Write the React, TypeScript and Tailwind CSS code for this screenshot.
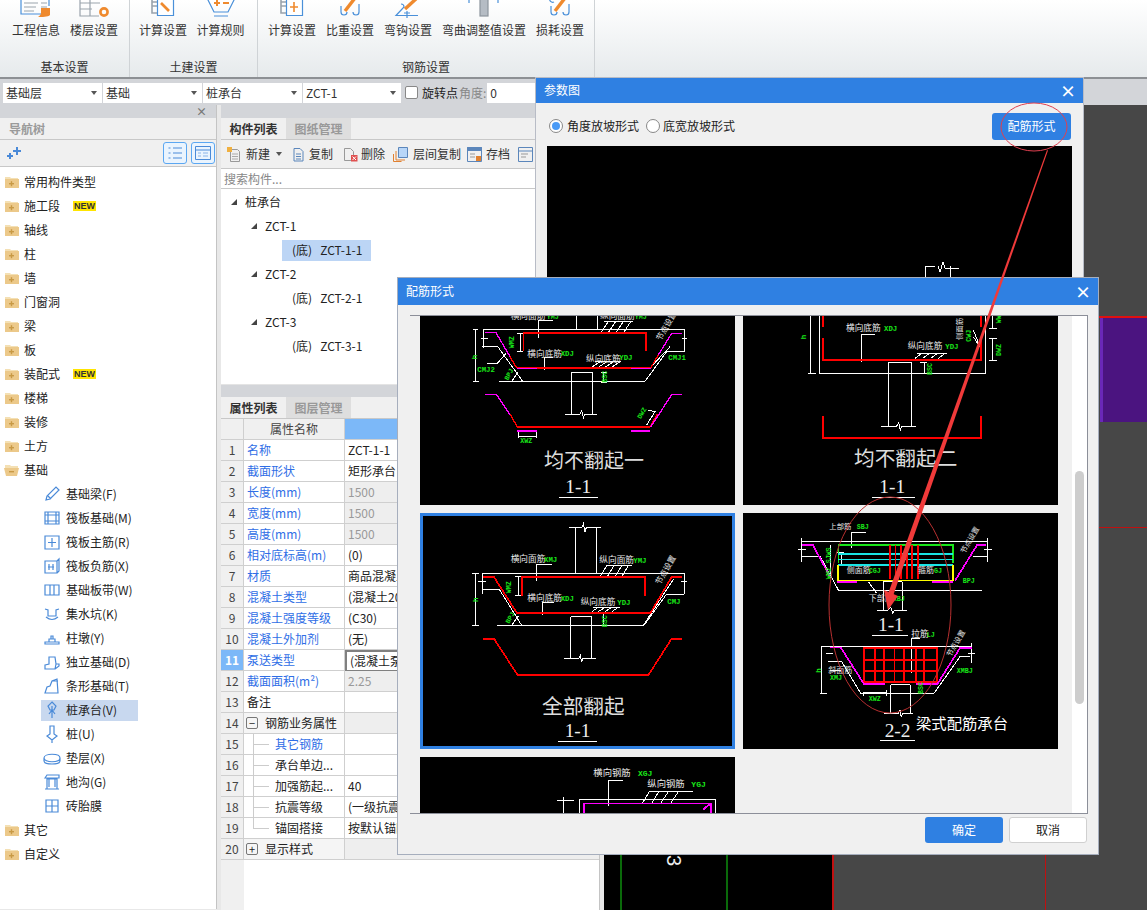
import type { ReactNode } from "react";

const BLUE = "#4a8ad8";

function P({ d, c = "#fff", w = 3 }: { d: string; c?: string; w?: number }) {
  return <path d={d} fill="none" stroke={c} strokeWidth={w} shapeRendering="crispEdges" />;
}

// labels inside the CAD pictures, sizes are in zoomed units (3 = 1px)
function T({ x, y, s = 26, c = "#e8e8e8", r, mono, serif, children }: { x: number; y: number; s?: number; c?: string; r?: number; mono?: boolean; serif?: boolean; children: ReactNode }) {
  const family = mono ? "'Liberation Mono', monospace" : serif ? "'Liberation Serif', serif" : "'Noto Sans CJK SC', sans-serif";
  return (
    <text x={x} y={y} fontSize={s} fill={c} fontFamily={family} fontWeight={mono ? 700 : 400} transform={r ? `rotate(${r} ${x} ${y})` : undefined}>
      {children}
    </text>
  );
}

const G = "#19e619";

function TileOne() {
  return (
    <svg viewBox="30 18 945 567" className="block h-full w-full bg-black">
      <P d="M220 58H825M498 18V58M562 18V58M195 58V215M188 58H205M188 215H208M220 58V115M212 85H235M215 108H262L338 214M268 214H705L770 125H822M822 58V125M815 85H832M330 70V125M320 70H340M320 125H340M385 30H430M385 30V85M403 142H430M403 142V180M230 160H262L288 130M305 214L325 185M485 187H548M485 187V313M548 187V313M465 313H510L515 303L520 323L524 313H560M572 187H590M572 217H590M580 187V217M570 72L595 35M592 72L617 35M615 72L640 35M638 72L662 35M582 35H668M545 172L570 155M565 172L590 155M585 172L610 155M605 172L630 155M555 155H632M720 174L780 110" />
      <P d="M340 122V68H708V122" c="#f00" w={5} />
      <P d="M322 174H722" c="#f00" w={5} />
      <P d="M225 68H258L300 140" c="#f0f" w={4} />
      <P d="M300 140L320 174" c="#f00" w={4} />
      <P d="M722 174L745 135" c="#f00" w={4} />
      <P d="M745 135L785 70H815" c="#f0f" w={4} />
      <P d="M322 175H380M664 175H722" c="#f0f" w={5} />
      <T x={302} y={26}>横向面筋</T>
      <T x={410} y={26} s={20} c={G} mono>YMJ</T>
      <T x={570} y={28}>纵向面筋</T>
      <T x={674} y={28} s={20} c={G} mono>YMJ</T>
      <T x={352} y={140}>横向底筋</T>
      <T x={452} y={138} s={22} c={G} mono>XDJ</T>
      <T x={528} y={156}>纵向底筋</T>
      <T x={628} y={150} s={22} c={G} mono>YDJ</T>
      <T x={202} y={186} s={22} c={G} mono>CMJ2</T>
      <T x={775} y={150} s={22} c={G} mono>CMJ1</T>
      <T x={312} y={115} s={20} c={G} r={-90} mono>WMZ</T>
      <T x={200} y={148} s={22} c={G} r={-90} mono>h</T>
      <T x={294} y={212} s={20} c={G} r={-62} mono>BPJ</T>
      <T x={592} y={218} s={20} c={G} r={-90} mono>BSC</T>
      <T x={752} y={94} s={24} r={-60}>节点设置</T>
      <P d="M225 254H260L300 315" c="#f0f" w={4} />
      <P d="M300 312L322 351H720L742 312" c="#f00" w={4} />
      <P d="M722 351L785 254H815" c="#f0f" w={4} />
      <P d="M322 362H380M664 362H720" c="#f0f" w={5} />
      <P d="M325 365V385M380 365V385M325 378H380M710 345L735 305L715 300" />
      <T x={331} y={400} s={20} c={G} mono>XWZ</T>
      <T x={692} y={328} s={20} c={G} r={-60} mono>DWZ</T>
      <T x={402} y={474} s={60} c="#ddd">均不翻起一</T>
      <T x={466} y={548} s={58} c="#eee" serif>1-1</T>
      <P d="M447 562H563" />
    </svg>
  );
}

function TileTwo() {
  return (
    <svg viewBox="9 18 945 567" className="block h-full w-full bg-black">
      <P d="M212 18V190M205 190H228M238 18V190H737V18M445 158H515M445 158V348M515 158V348M424 348H470L476 338L481 360L485 348H527M552 158V190M540 158H562M365 72H405M365 72V155M525 145L545 130M548 145L568 130M572 145L592 130M595 145L615 130M530 130H622M747 85H770M747 152H770M758 85V152M747 56H770M758 18V56M700 60L722 115M700 80L722 115" />
      <P d="M248 18V50M248 85V150H723V85M723 18V50" c="#f00" w={5} />
      <P d="M248 318V383H723V318" c="#f00" w={5} />
      <T x={318} y={62}>横向底筋</T>
      <T x={432} y={62} s={22} c={G} mono>XDJ</T>
      <T x={503} y={118}>纵向底筋</T>
      <T x={616} y={118} s={22} c={G} mono>YDJ</T>
      <T x={198} y={88} s={22} c={G} r={-90} mono>h</T>
      <T x={575} y={195} s={20} c={G} r={-90} mono>BSC</T>
      <T x={692} y={95} s={20} c={G} r={-90} mono>CWJ</T>
      <T x={784} y={138} s={20} c={G} r={-90} mono>DWZ</T>
      <T x={784} y={40} s={20} c={G} r={-90} mono>WW</T>
      <T x={666} y={90} s={22} r={-90}>侧面筋</T>
      <T x={342} y={468} s={62} c="#ddd">均不翻起二</T>
      <T x={418} y={548} s={58} c="#eee" serif>1-1</T>
      <P d="M396 562H524" />
    </svg>
  );
}

function TileThree() {
  return (
    <svg viewBox="39 18 927 690" className="block h-full w-full bg-black">
      <P d="M217 190H822M497 52V190M558 52V190M478 52H516L520 42L525 66L529 52H572M197 190V347M187 190H207M187 347H207M217 190V252M205 215H228M217 238H268L335 346M262 346H702L770 252H822M822 190V252M812 215H830M326 200V257M316 200H336M316 257H336M380 162H425M380 162V212M398 277H432M398 277V315M567 205L590 167M589 205L612 167M612 205L635 167M632 205L655 167M588 167H665M545 305L565 292M565 305L585 292M585 305L605 292M605 305L625 292M550 292H630M305 346L325 318M482 320H545M482 320V445M545 320V445M462 445H506L511 435L515 457L519 445H557M568 310H590M568 347H590M580 310V347M700 346L790 208" />
      <P d="M336 257V201H705V257" c="#f00" w={5} />
      <P d="M219 201H252L320 308H722L785 201H815" c="#f00" w={5} />
      <P d="M220 386H252L322 494H716L785 386H815" c="#f00" w={5} />
      <T x={302} y={156}>横向面筋</T>
      <T x={402} y={156} s={22} c={G} mono>XMJ</T>
      <T x={568} y={160}>纵向面筋</T>
      <T x={670} y={158} s={22} c={G} mono>YMJ</T>
      <T x={352} y={272}>横向底筋</T>
      <T x={452} y={272} s={22} c={G} mono>XDJ</T>
      <T x={512} y={284}>纵向底筋</T>
      <T x={622} y={284} s={22} c={G} mono>YDJ</T>
      <T x={772} y={282} s={22} c={G} mono>CMJ</T>
      <T x={304} y={250} s={20} c={G} r={-90} mono>WMZ</T>
      <T x={203} y={276} s={22} c={G} r={-90} mono>h</T>
      <T x={297} y={342} s={20} c={G} r={-60} mono>BPJ</T>
      <T x={590} y={352} s={20} c={G} r={-90} mono>BSC</T>
      <T x={750} y={226} s={24} r={-60}>节点设置</T>
      <T x={396} y={612} s={62} c="#ddd">全部翻起</T>
      <T x={464} y={682} s={58} c="#eee" serif>1-1</T>
      <P d="M445 694H560" />
    </svg>
  );
}

function TileFour() {
  return (
    <svg viewBox="9 9 945 708" className="block h-full w-full bg-black">
      <P d="M185 94H742M185 85V155M175 118H198M185 138H240L295 240H725M742 85V155M732 118H755M700 138H742M335 66H378M335 66V115M430 215H487M430 215V302M487 215V302M412 302H442L452 292L458 310L462 302H500M385 215L410 250M270 105V205M290 128H312M290 165H312M305 128V165M245 408H695M245 408V550M240 550H262M258 430H280M265 455H305L362 550H582L660 440H690M695 398V460M685 430H705M514 385V490M514 385H540M370 545V558M370 548H438M438 540V558M452 524H510M452 524V612M510 524V612M432 610H475L480 600L484 622L488 610H520M270 482H305" />
      <P d="M295 105H638V160" c="#19e619" w={5} />
      <P d="M295 105V160" c="#19e619" w={5} />
      <P d="M295 132H638M295 148H638M295 165H638" c="#19e6e6" w={5} />
      <P d="M293 165V211H638V165" c="#ff0" w={5} />
      <P d="M450 105V208M466 105V208M482 105V208M500 105V208M516 105V208M534 105V208" c="#f00" w={5} />
      <P d="M186 104H218L270 200M712 104H738M712 104L645 212M290 215H350M575 215H640" c="#f0f" w={5} />
      <P d="M372 414H590V516H372ZM372 450H590M372 483H590M405 414V516M432 414V516M463 414V516M492 414V516M528 414V516M552 414V516" c="#f00" w={5} />
      <P d="M270 412H302L372 522H435M528 522H592L660 414H695" c="#f0f" w={5} />
      <T x={268} y={58} s={22}>上部筋</T>
      <T x={350} y={58} s={20} c={G} mono>SBJ</T>
      <T x={320} y={188} s={24}>侧面筋</T>
      <T x={386} y={188} s={20} c={G} mono>CGJ</T>
      <T x={534} y={190} s={24}>箍筋</T>
      <T x={582} y={190} s={20} c={G} mono>GJ</T>
      <T x={386} y={272} s={24}>下部筋</T>
      <T x={458} y={272} s={20} c={G} mono>XBJ</T>
      <T x={668} y={220} s={20} c={G} mono>BPJ</T>
      <T x={272} y={208} s={20} c={G} r={-90} mono>WMZ SJWS</T>
      <T x={674} y={132} s={22} r={-60}>节点设置</T>
      <T x={414} y={362} s={58} c="#eee" serif>1-1</T>
      <P d="M396 376H504" />
      <T x={514} y={382} s={26}>拉筋</T>
      <T x={560} y={382} s={20} c={G} mono>LJ</T>
      <T x={265} y={488} s={24}>斜面筋</T>
      <T x={270} y={510} s={20} c={G} mono>XMJ</T>
      <T x={650} y={488} s={20} c={G} mono>XMBJ</T>
      <T x={386} y={572} s={20} c={G} mono>XWZ</T>
      <T x={548} y={552} s={20} c={G} r={-90} mono>BSC</T>
      <T x={244} y={488} s={22} c={G} r={-90} mono>h</T>
      <T x={632} y={442} s={22} r={-60}>节点设置</T>
      <T x={434} y={680} s={58} c="#eee" serif>2-2</T>
      <P d="M420 692H526" />
      <T x={528} y={656} s={46} c="#fff">梁式配筋承台</T>
    </svg>
  );
}

function TileFive() {
  return (
    <svg viewBox="30 741 945 171" className="block h-full w-full bg-black">
      <P d="M440 870H492M460 860V912M510 868H916V912M508 868V912M595 812H638M595 812V888M697 880L718 845M725 880L746 845M752 880L775 845M782 880L805 845M718 845H848" />
      <P d="M522 912V880H902V912" c="#f0f" w={5} />
      <P d="M880 898L900 882" c="#f0f" w={6} />
      <T x={550} y={798} s={28}>横向钢筋</T>
      <T x={684} y={798} s={24} c={G} mono>XGJ</T>
      <T x={712} y={830} s={28}>纵向钢筋</T>
      <T x={844} y={830} s={24} c={G} mono>YGJ</T>
    </svg>
  );
}

function Folder({ open }: { open?: boolean }) {
  return (
    <svg width="15" height="14" viewBox="0 0 15 14" className="shrink-0">
      <path d="M1 2h5l1 1h7v3H1z" fill="#f4e0b4" />
      {open ? <path d="M0 5h15l-2 8H2z" fill="#ecc98a" /> : <rect x="1" y="4" width="14" height="9" fill="#ecc98a" />}
      <rect x="5" y="8" width="5" height="1.4" fill="#c99a45" />
      {!open && <rect x="6.8" y="6.2" width="1.4" height="5" fill="#c99a45" />}
    </svg>
  );
}

const navFolders = ["常用构件类型", "施工段", "轴线", "柱", "墙", "门窗洞", "梁", "板", "装配式", "楼梯", "装修", "土方"];

function ChildIcon({ n }: { n: number }) {
  const shapes: ReactNode[] = [
    <path d="M3 15l1-4L13 2l3 3-9 9z M5 11l3 3" />,
    <path d="M2 3h14v12H2z M5 3v12M13 3v12M2 6h14M2 12h14" />,
    <path d="M2 3h14v13H2z M9 5v9M5 9.5h8" />,
    <path d="M2 4h12v12H2z M14 4l2-2v12l-2 2 M6 7v6M10 7v6M5 10h6" />,
    <path d="M2 4h14v10H2z M7 4v10M11 4v10" />,
    <path d="M2 4l3 1v6h8V5l3-1M3 12q6 5 12 0" />,
    <path d="M2 13h14v2H2z M6 13v-3h6v3M8 10V7h2v3" />,
    <path d="M2 12l4-1V4h6l1 7-1 5H2z M12 16l4-3v-2l-3 0" />,
    <path d="M2 16l2-6 3-1 2-5 5-2 1 14z M9 4l6 0" />,
    <path d="M9 1l4 4-2 4h-4l-2-4z M9 5v12M6 13l3-4 3 4" />,
    <path d="M7 1h4v8l3 2-5 4-5-4 3-2z M9 15v3" />,
    <path d="M1 9c0-5 16-5 16 0s-16 5-16 0z M1 9v3c0 4 16 4 16 0V9" />,
    <path d="M2 16h14M4 16V6h10v10M2 5l2-3h12v3z M6 6v8M12 6v8" />,
    <path d="M3 3h12v12H3z M9 3v12M3 9h12" />,
  ];
  return (
    <svg width="18" height="18" viewBox="0 0 18 18" fill="none" stroke={BLUE} strokeWidth="1.2" className="shrink-0">
      {shapes[n]}
    </svg>
  );
}

const navChildren = ["基础梁(F)", "筏板基础(M)", "筏板主筋(R)", "筏板负筋(X)", "基础板带(W)", "集水坑(K)", "柱墩(Y)", "独立基础(D)", "条形基础(T)", "桩承台(V)", "桩(U)", "垫层(X)", "地沟(G)", "砖胎膜"];

function New() {
  return <span className="ml-2 bg-[#ffe500] px-px font-['Liberation_Sans',sans-serif] text-[9px] leading-[10px] font-bold text-[#333]">NEW</span>;
}

function NavTree() {
  return (
    <div className="flex h-[804px] w-[217px] shrink-0 flex-col border-r border-[#c4c4c4] bg-white">
      <div className="flex h-[13px] items-center justify-end bg-[#d3d5d9] pr-[9px] text-[11px] leading-none font-bold text-[#777]">×</div>
      <div className="flex h-[22px] items-center border-b border-[#c8c8c8] bg-[#f0f0f0] pl-[9px] text-[12px] font-bold text-[#9a9a9a]">导航树</div>
      <div className="flex h-[27px] items-center gap-1 border-b border-[#c8c8c8] bg-[#f0f0f0] pr-[1px]">
        <svg width="16" height="14" viewBox="0 0 16 14" fill={BLUE} className="ml-[6px] mr-auto">
          <path d="M10 1h2v3h3v2h-3v3h-2V6H7V4h3zM3 7h2v2h2v2H5v2H3v-2H1V9h2z" />
        </svg>
        <div className="flex h-[22px] w-[24px] items-center justify-center rounded-[3px] border border-[#5ba7f2] bg-[#eaf4fe]">
          <svg width="16" height="14" fill="none" stroke={BLUE}>
            <path d="M1.5 2h2M1.5 7h2M1.5 12h2M6 2h9M6 7h9M6 12h9" />
          </svg>
        </div>
        <div className="flex h-[22px] w-[24px] items-center justify-center rounded-[3px] border border-[#5ba7f2] bg-[#eaf4fe]">
          <svg width="16" height="14" fill="none" stroke={BLUE}>
            <path d="M.5.5h15v13H.5zM.5 4h15" />
            <path d="M3 7h3M8 7h5M3 10h3M8 10h5" stroke="#8ab4e8" />
          </svg>
        </div>
      </div>
      <div className="flex flex-col pt-[3px] text-[12px] text-[#222]">
        {navFolders.map((name) => (
          <div key={name} className="flex h-[24px] items-center gap-[5px] pl-[4px]">
            <Folder />
            <span>{name}</span>
            {(name === "施工段" || name === "装配式") && <New />}
          </div>
        ))}
        <div className="flex h-[24px] items-center gap-[5px] pl-[4px]">
          <Folder open />
          <span>基础</span>
        </div>
        {navChildren.map((name, i) => (
          <div key={name} className="flex h-[24px] items-center pl-[41px]">
            <div className={`flex h-[21px] w-[97px] items-center gap-[5px] whitespace-nowrap pl-[2px] ${name === "桩承台(V)" ? "bg-[#c8d8ef]" : ""}`}>
              <ChildIcon n={i} />
              <span>{name}</span>
            </div>
          </div>
        ))}
        <div className="flex h-[24px] items-center gap-[5px] pl-[4px]">
          <Folder />
          <span>其它</span>
        </div>
        <div className="flex h-[24px] items-center gap-[5px] pl-[4px]">
          <Folder />
          <span>自定义</span>
        </div>
      </div>
    </div>
  );
}

function Tabs({ a, b }: { a: string; b: string }) {
  return (
    <div className="flex h-[22px] border-b border-[#c8c8c8] bg-[#f0f0f0] text-[12px] font-bold">
      <div className="flex w-[65px] items-center justify-center text-[#333]">{a}</div>
      <div className="flex w-[65px] items-center justify-center bg-[#dedede] text-[#999]">{b}</div>
    </div>
  );
}

const Tri = () => (
  <svg width="6" height="6" viewBox="0 0 6 6" fill="#444" className="shrink-0">
    <path d="M6 0V6H0z" />
  </svg>
);

const compTree: [number, string, boolean?][] = [
  [0, "桩承台", true],
  [1, "ZCT-1", true],
  [2, "(底)   ZCT-1-1"],
  [1, "ZCT-2", true],
  [2, "(底)   ZCT-2-1"],
  [1, "ZCT-3", true],
  [2, "(底)   ZCT-3-1"],
];

function ToolIcon({ kind }: { kind: number }) {
  return (
    <svg width="15" height="15" viewBox="0 0 15 15" fill="none" stroke="#5b86bb" className="shrink-0">
      {kind === 0 && (
        <>
          <path d="M3.5 2.5h7l2 2v10h-9z" stroke="#999" />
          <path d="M5 7h6M5 9.5h6M5 12h6" stroke="#aaa" />
          <path d="M0 0h5v5H0z" fill="#f0b040" stroke="none" />
        </>
      )}
      {kind === 1 && <path d="M3 1.5h6l3 3v9.5H3zM5 7h5M5 9.5h5M5 12h5" />}
      {kind === 2 && (
        <>
          <path d="M1.5 1.5h6l3 3v9h-9z" stroke="#999" />
          <path d="M8 8h6.5v6.5H8z" fill="#e05050" stroke="none" />
          <path d="M9.5 9.5l3.5 3.5M13 9.5l-3.5 3.5" stroke="#fff" />
        </>
      )}
      {kind === 3 && (
        <>
          <path d="M5.5 .5h9v10h-9z" fill="#b8d6f8" />
          <path d="M3 4v9h9M.5 7v7.5h8" stroke="#e08030" />
        </>
      )}
      {kind === 4 && (
        <>
          <path d="M.5 .5h14v14H.5z" />
          <path d="M.5 .5h14v3H.5z" fill="#5b86bb" />
          <path d="M3 7h5M3 10h5" stroke="#999" />
          <path d="M9 9h5v5H9z" fill="#e08030" stroke="none" />
        </>
      )}
      {kind === 5 && (
        <>
          <path d="M.5 .5h14v14H.5zM.5 4h14" />
          <path d="M3 7h7M3 10h5" stroke="#999" />
        </>
      )}
    </svg>
  );
}

function ComponentList() {
  return (
    <div className="flex h-[279px] flex-col bg-white">
      <div className="h-[13px] bg-[#d3d5d9]" />
      <Tabs a="构件列表" b="图纸管理" />
      <div className="flex h-[29px] items-center whitespace-nowrap border-b border-[#c8c8c8] bg-[#f0f0f0] pl-[6px] text-[12px] text-[#333]">
        <ToolIcon kind={0} />
        <span className="ml-[4px]">新建</span>
        <span className="ml-[6px] h-0 w-0 border-x-[3px] border-t-[4px] border-x-transparent border-t-[#555]" />
        <span className="ml-[9px]"><ToolIcon kind={1} /></span>
        <span className="ml-[3px]">复制</span>
        <span className="ml-[10px]"><ToolIcon kind={2} /></span>
        <span className="ml-[3px]">删除</span>
        <span className="ml-[8px]"><ToolIcon kind={3} /></span>
        <span className="ml-[5px]">层间复制</span>
        <span className="ml-[6px]"><ToolIcon kind={4} /></span>
        <span className="ml-[4px]">存档</span>
        <span className="ml-[8px]"><ToolIcon kind={5} /></span>
      </div>
      <div className="flex h-[20px] items-center border-b border-[#c8c8c8] pl-[3px] text-[12px] text-[#888]">搜索构件...</div>
      <div className="flex flex-col pt-[1px] text-[12px] text-[#222]">
        {compTree.map(([depth, label, arrow]) => (
          <div key={label} className="flex h-[24px] items-center">
            {arrow ? (
              <div className={`flex items-center gap-[8px] ${depth === 0 ? "pl-[10px]" : "pl-[30px]"}`}>
                <Tri />
                <span>{label}</span>
              </div>
            ) : (
              <div className={`ml-[61px] flex h-[21px] w-[89px] items-center whitespace-pre pl-[10px] ${label === "(底)   ZCT-1-1" ? "bg-[#bcd5f5]" : ""}`}>{label}</div>
            )}
          </div>
        ))}
      </div>
    </div>
  );
}

type Row = { name: string; value?: string; blue?: boolean; gray?: boolean; indent?: boolean; box?: string; active?: boolean; last?: boolean };

const rows: Row[] = [
  { name: "名称", value: "ZCT-1-1", blue: true },
  { name: "截面形状", value: "矩形承台", blue: true },
  { name: "长度(mm)", value: "1500", blue: true, gray: true },
  { name: "宽度(mm)", value: "1500", blue: true, gray: true },
  { name: "高度(mm)", value: "1500", blue: true, gray: true },
  { name: "相对底标高(m)", value: "(0)", blue: true },
  { name: "材质", value: "商品混凝土", blue: true },
  { name: "混凝土类型", value: "(混凝土20石)", blue: true },
  { name: "混凝土强度等级", value: "(C30)", blue: true },
  { name: "混凝土外加剂", value: "(无)", blue: true },
  { name: "泵送类型", value: "(混凝土泵)", blue: true, active: true },
  { name: "截面面积(m²)", value: "2.25", blue: true, gray: true },
  { name: "备注" },
  { name: "钢筋业务属性", box: "−" },
  { name: "其它钢筋", blue: true, indent: true },
  { name: "承台单边...", indent: true },
  { name: "加强筋起...", value: "40", indent: true },
  { name: "抗震等级", value: "(一级抗震)", indent: true },
  { name: "锚固搭接", value: "按默认锚固搭接", indent: true, last: true },
  { name: "显示样式", box: "+" },
];

function PropertyTable() {
  return (
    <div className="flex min-h-0 flex-1 flex-col bg-white">
      <div className="h-[12px] bg-[#d3d5d9]" />
      <Tabs a="属性列表" b="图层管理" />
      <div className="flex flex-col text-[12px]">
        <div className="flex h-[21px]">
          <div className="w-[23px] border-r border-b border-[#cfcfcf] bg-[#f0f0f0]" />
          <div className="flex w-[101px] items-center justify-center border-r border-b border-[#cfcfcf] bg-[#f0f0f0] text-[#444]">属性名称</div>
          <div className="flex-1 border-b border-[#cfcfcf] bg-[#7cb8f8]" />
        </div>
        {rows.map((r, i) => {
          const band = Boolean(r.box);
          return (
            <div key={r.name} className="flex h-[21px]">
              <div className={`flex w-[23px] items-center justify-center border-r border-b border-[#cfcfcf] ${r.active ? "bg-[#7cb8f8] font-bold text-white" : "bg-[#f0f0f0] text-[#444]"}`}>{i + 1}</div>
              <div className={`relative flex w-[101px] items-center whitespace-nowrap border-r border-b border-[#cfcfcf] ${band ? "bg-[#f5f5f5]" : ""} ${r.blue ? "text-[#2f6ee6]" : "text-[#222]"} ${r.indent ? "pl-[31px]" : r.box ? "pl-[2px]" : "pl-[3px]"}`}>
                {r.indent && (
                  <>
                    <span className={`absolute left-[9px] top-0 w-px bg-[#ccc] ${r.last ? "h-[11px]" : "h-[21px]"}`} />
                    <span className="absolute left-[9px] top-[10px] h-px w-[16px] bg-[#ccc]" />
                  </>
                )}
                {r.box && <span className="mr-[7px] flex h-[12px] w-[12px] items-center justify-center rounded-[2px] border border-[#777] text-[11px] leading-none">{r.box}</span>}
                {r.name}
              </div>
              <div className={`flex flex-1 items-center whitespace-nowrap border-b pl-[3px] ${r.gray ? "bg-[#eeeeee] text-[#999]" : "text-[#222]"} ${band ? "bg-[#eeeeee]" : ""} ${r.active ? "border-2 border-[#808080] pl-[2px]" : "border-[#cfcfcf]"}`}>{r.value}</div>
            </div>
          );
        })}
      </div>
      <div className="flex-1 border-l-[23px] border-[#f0f0f0]" />
    </div>
  );
}

function CanvasArea() {
  return (
    <svg className="block h-full w-full" viewBox="604 105 543 805" preserveAspectRatio="none">
      <rect x="604" y="105" width="543" height="805" fill="#474747" />
      <rect x="604" y="316" width="543" height="2" fill="#e01010" />
      <rect x="1100" y="318" width="47" height="104" fill="#4b1480" />
      <rect x="1100" y="318" width="3" height="104" fill="#6a28b8" />
      <rect x="1099" y="527" width="48" height="1" fill="#c01010" />
      <rect x="604" y="840" width="229" height="70" fill="#000" />
      <rect x="620" y="840" width="2" height="70" fill="#0a6a0a" />
      <rect x="726" y="840" width="2" height="70" fill="#0a6a0a" />
      <rect x="832" y="840" width="2" height="70" fill="#c01010" />
      <rect x="1045" y="840" width="1" height="70" fill="#c01010" />
      <text x="667" y="844" fontSize="20" fill="#eee" fontFamily="'Liberation Sans', sans-serif" transform="rotate(90 667 844)">03</text>
    </svg>
  );
}

const ribbon = [
  { w: 130, pl: 7, title: "基本设置", items: [["工程信息", 58, 0], ["楼层设置", 58, 1]] },
  { w: 128, pl: 4, title: "土建设置", items: [["计算设置", 58, 2], ["计算规则", 57, 3]] },
  { w: 337, pl: 5, title: "钢筋设置", items: [["计算设置", 58, 4], ["比重设置", 58, 5], ["弯钩设置", 58, 6], ["弯曲调整值设置", 94, 7], ["损耗设置", 58, 8]] },
] as const;

function RibbonIcon({ n }: { n: number }) {
  const o = "#ef8a2e";
  const b = "#4a90d9";
  const g = "#9aa3ac";
  return (
    <svg width="34" height="19" viewBox="0 0 34 19" fill="none" strokeWidth="1.2">
      {n === 0 && (
        <>
          <path d="M2 -2V14H26" stroke={b} />
          <path d="M30 -2V6" stroke={b} />
          <path d="M5 3h14M5 7h12M5 11h10M22 3h6M22 7h6" stroke={g} />
          <path d="M22 8h9v7c-2 2-8 2-12 2 2-1 3-3 3-4z" fill="#ef8a2e" stroke="none" />
        </>
      )}
      {n === 1 && (
        <>
          <path d="M3 -2V16H22M3 3h20M3 9h12M13 -2V16" stroke={g} />
          <circle cx="27" cy="12" r="3.6" stroke={o} strokeWidth="2.6" />
        </>
      )}
      {(n === 2 || n === 4) && (
        <>
          <path d="M6 -2V13H11M6 2h5M6 6h5" stroke={g} strokeWidth="1.6" />
          <path d="M11.5 -2H27.5V15.5H11.5z" stroke={b} fill="#fff" />
          {n === 2 ? <path d="M15 3l8 8" stroke={o} strokeWidth="2.6" /> : <path d="M19 2v10M15 7h8" stroke={o} strokeWidth="1.6" />}
        </>
      )}
      {n === 3 && (
        <>
          <path d="M3 -2L10 12H24L31 -2M10 16H24" stroke={b} strokeWidth="1.2" />
          <path d="M10 3h6M19 3h6M13 0v6" stroke={o} strokeWidth="2" />
        </>
      )}
      {(n === 5 || n === 8) && (
        <>
          <path d="M8 6v6a3 3 0 0 0 6 0M26 4v8a3 3 0 0 1-6 0" stroke={b} />
          {n === 8 && <path d="M7 -2a3 3 0 0 0 4 4" stroke={b} />}
          <path d="M12 11L22 -2" stroke={o} strokeWidth="3.4" />
        </>
      )}
      {n === 6 && (
        <>
          <path d="M10 4a3 3 0 0 1 3 3L5 15.5H27M16 11v7M13 13h6" stroke={b} />
          <path d="M14 9L26 -2" stroke={o} strokeWidth="3.4" />
        </>
      )}
      {n === 7 && (
        <>
          <path d="M2 -2v5M31 -2v5" stroke={b} />
          <rect x="13" y="-2" width="8" height="18" fill="#b5bcc4" stroke="#8d959d" />
        </>
      )}
    </svg>
  );
}

function Select({ w, label }: { w: number; label: string }) {
  return (
    <div style={{ width: w }} className="flex h-[20px] items-center justify-between bg-white pr-[5px] pl-[3px] text-[12px] text-[#333]">
      {label}
      <span className="h-0 w-0 border-x-[3px] border-t-[4px] border-x-transparent border-t-[#555]" />
    </div>
  );
}

export default function App() {
  return (
    <div className="relative flex h-[910px] w-[1147px] flex-col overflow-hidden bg-[#d3d5d9] font-['Noto_Sans_CJK_SC','Liberation_Sans',sans-serif]">
      {/* ribbon */}
      <div className="flex h-[79px] shrink-0 border-b-2 border-[#8d9094] bg-gradient-to-b from-white to-[#e6eaec]">
        {ribbon.map((g) => (
          <div key={g.title} style={{ width: g.w }} className="flex flex-col border-r border-[#cfd3d6]">
            <div style={{ paddingLeft: g.pl }} className="flex h-[60px]">
              {g.items.map(([label, w, icon]) => (
                <div key={label + icon} style={{ width: w }} className="flex flex-col items-center">
                  <RibbonIcon n={icon} />
                  <span className="mt-[2px] text-[12px] leading-[18px] text-[#333]">{label}</span>
                </div>
              ))}
            </div>
            <div className="text-center text-[12px] leading-[14px] text-[#333]">{g.title}</div>
          </div>
        ))}
      </div>

      {/* selects */}
      <div className="flex h-[26px] shrink-0 items-center gap-[1px] pl-[3px] pt-[1px] text-[12px]">
        <Select w={99} label="基础层" />
        <Select w={99} label="基础" />
        <Select w={99} label="桩承台" />
        <Select w={98} label="ZCT-1" />
        <span className="ml-[3px] h-[13px] w-[13px] rounded-[2px] border border-[#888] bg-white" />
        <span className="ml-[3px] text-[#222]">旋转点</span>
        <span className="text-[#888]">角度:</span>
        <div className="flex h-[20px] w-[60px] items-center bg-white pl-[3px] text-[#333]">0</div>
      </div>

      {/* panels */}
      <div className="flex min-h-0 flex-1 bg-[#e8e8e8]">
        <NavTree />
        <div className="ml-[4px] flex w-[379px] shrink-0 flex-col gap-[1px] border-r border-[#c4c4c4] bg-[#e4e4e4]">
          <ComponentList />
          <PropertyTable />
        </div>
        <div className="ml-[4px] min-w-0 flex-1">
          <CanvasArea />
        </div>
      </div>

      {/* 参数图 dialog */}
      <div className="absolute left-[535px] top-[77px] flex h-[400px] w-[549px] flex-col border border-[#b8bcc6] bg-[#f0f0f0]">
        <div className="flex h-[25px] shrink-0 items-center justify-between bg-[#2f80e2] pr-[7px] pl-[8px] pb-[2px] text-[12px] text-white">
          <span>参数图</span>
          <span className="text-[16px] leading-none font-bold">×</span>
        </div>
        <div className="flex h-[43px] shrink-0 items-center pr-[12px] pl-[13px] pt-[3px] text-[12px] text-[#222]">
          <span className="flex h-[14px] w-[14px] items-center justify-center rounded-full border border-[#888] bg-white">
            <span className="h-[8px] w-[8px] rounded-full bg-[#4a9af5]" />
          </span>
          <span className="ml-[4px]">角度放坡形式</span>
          <span className="ml-[7px] h-[14px] w-[14px] rounded-full border border-[#888] bg-white" />
          <span className="ml-[3px]">底宽放坡形式</span>
          <button className="ml-auto flex h-[27px] w-[79px] items-center justify-center rounded-[3px] bg-[#2f80e2] text-white">配筋形式</button>
        </div>
        <div className="mx-[11px] flex-1 bg-black">
          <svg viewBox="0 0 525 131" className="block h-[131px] w-[525px]">
            <path d="M378 131V120H388M391 120L393 126L396 116L398 122H412M403 131V120" fill="none" stroke="#fff" shapeRendering="crispEdges" />
          </svg>
        </div>
      </div>

      {/* 配筋形式 dialog */}
      <div className="absolute left-[397px] top-[277px] flex h-[578px] w-[702px] flex-col border border-[#a6aebd] bg-[#f0f0f0]">
        <div className="flex h-[27px] shrink-0 items-center justify-between bg-[#2f80e2] pr-[7px] pl-[8px] pb-[2px] text-[12px] text-white">
          <span>配筋形式</span>
          <span className="text-[16px] leading-none font-bold">×</span>
        </div>
        <div className="mx-[12px] mt-[10px] flex h-[499px] w-[678px] shrink-0 border-y border-[#8c8f99] border-r">
          <div className="grid flex-1 grid-cols-[315px_315px] grid-rows-[189px_236px_57px] gap-x-[8px] gap-y-[8px] overflow-hidden pl-[10px]">
            <TileOne />
            <TileTwo />
            <div className="border-[3px] border-[#2f80e2]">
              <TileThree />
            </div>
            <TileFour />
            <TileFive />
          </div>
          <div className="flex w-[15px] shrink-0 flex-col bg-white pt-[155px]">
            <div className="mx-auto h-[233px] w-[9px] rounded-full bg-[#cdcdcd]" />
          </div>
        </div>
        <div className="mt-[3px] flex justify-end gap-[6px] pr-[11px] text-[12px]">
          <button className="flex h-[26px] w-[78px] items-center justify-center rounded-[3px] bg-[#2f80e2] text-white">确定</button>
          <button className="flex h-[26px] w-[78px] items-center justify-center rounded-[3px] border border-[#d0d0d0] bg-white text-[#222]">取消</button>
        </div>
      </div>

      {/* red markup drawn on top of the screenshot */}
      <svg className="pointer-events-none absolute inset-0" width="1147" height="910" fill="none">
        <ellipse cx="1034" cy="127" rx="33" ry="24" stroke="#e04050" />
        <ellipse cx="890" cy="605" rx="61" ry="108" stroke="#b83030" />
        <path d="M1047 150L1048 150.4L893 596L888 594Z" fill="#f03a3a" />
        <path d="M888 610L884 590L898 596Z" fill="#f03a3a" />
      </svg>
    </div>
  );
}
